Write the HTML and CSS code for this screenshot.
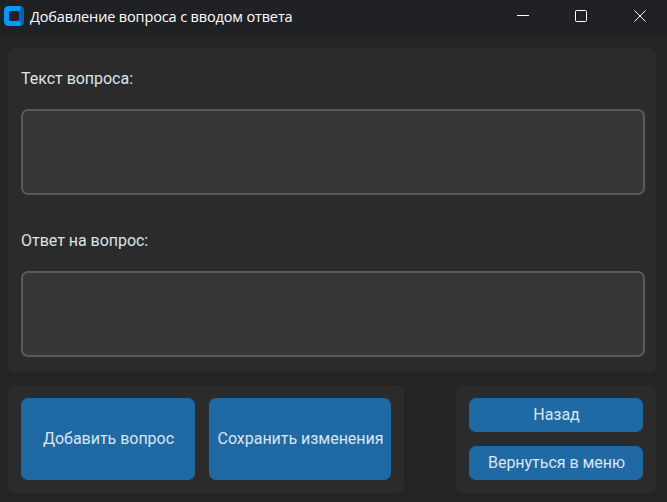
FILE: index.html
```html
<!DOCTYPE html>
<html lang="ru">
<head>
<meta charset="utf-8">
<title>Добавление вопроса с вводом ответа</title>
<link rel="stylesheet" href="styles.css">
</head>
<body>
<header class="titlebar">
<svg class="logo" width="20" height="20" viewBox="0 0 20 20"><rect x="5" width="15" height="20" rx="4" fill="#0562b0"/><path d="M5 0h10q2 0 2 2l-1 3 1 5-1 5 1 3q0 2-2 2H5q-5 0-5-5V5q0-5 5-5z" fill="#0a97ff"/><path d="M15 5l2-1v12l-2-1z" fill="#0562b0"/><rect x="5" y="5" width="10" height="10" rx="2" fill="#202124"/></svg>
<h1 class="title">Добавление вопроса с вводом ответа</h1>
<div class="controls">
<svg width="12" height="12" viewBox="0 0 12 12"><path d="M0 5.500h12"/></svg>
<svg width="12" height="12" viewBox="0 0 12 12"><rect x=".5" y=".5" width="11" height="11" rx="1"/></svg>
<svg width="12" height="12" viewBox="0 0 12 12"><path d="M.5.5l11 11M11.500.5l-11 11"/></svg>
</div>
</header>
<main class="content">
<section class="panel form">
<label class="label" for="question">Текст вопроса:</label>
<textarea class="field" id="question"></textarea>
<label class="label" for="answer">Ответ на вопрос:</label>
<textarea class="field" id="answer"></textarea>
</section>
<footer class="actions">
<div class="panel primary">
<button class="button add">Добавить вопрос</button>
<button class="button save">Сохранить изменения</button>
</div>
<div class="panel nav">
<button class="button">Назад</button>
<button class="button">Вернуться в меню</button>
</div>
</footer>
</main>
</body>
</html>
```
FILE: styles.css
```css
* { box-sizing: border-box; }
body { margin: 0; height: 502px; overflow: hidden; background: #242424; color: #dce4ee; font: 16px Roboto, sans-serif; }
.titlebar { display: flex; align-items: center; height: 35px; padding: 0 21px 3px 4px; background: #202124; }
.logo { margin-right: 6px; }
.title { margin: 0; color: #fff; font: 14.5px "Open Sans", sans-serif; letter-spacing: -0.14px; white-space: nowrap; }
.controls { display: flex; gap: 46px; margin-left: auto; }
.controls svg { fill: none; stroke: #fff; stroke-width: 1; }
.controls svg:last-child { margin-left: 1px; }
.content { padding: 13px 11px 9px 8px; }
.panel { background: #2b2b2b; border-radius: 7px; }
.form { display: flex; flex-direction: column; height: 324px; padding: 16px 11px 0 13px; }
.label { flex: none; height: 30px; line-height: 30px; letter-spacing: -0.03px; }
.field { flex: none; height: 86px; margin: 15px 0 31px; padding: 6px; resize: none; border: 2px solid #565b5e; border-radius: 7px; background: #343638; color: #dce4ee; outline: none; }
.actions { display: flex; justify-content: space-between; margin-top: 13px; height: 108px; }
.primary { display: flex; gap: 14px; padding: 13px; }
.nav { display: flex; flex-direction: column; gap: 14px; width: 200px; padding: 13px; }
.button { padding: 0 0 2px 1px; border: 0; border-radius: 7px; background: #1f6aa5; color: #dce4ee; font: inherit; letter-spacing: -0.03px; white-space: nowrap; }
.add { width: 174px; }
.save { width: 182px; }
.nav .button { height: 34px; }
```
